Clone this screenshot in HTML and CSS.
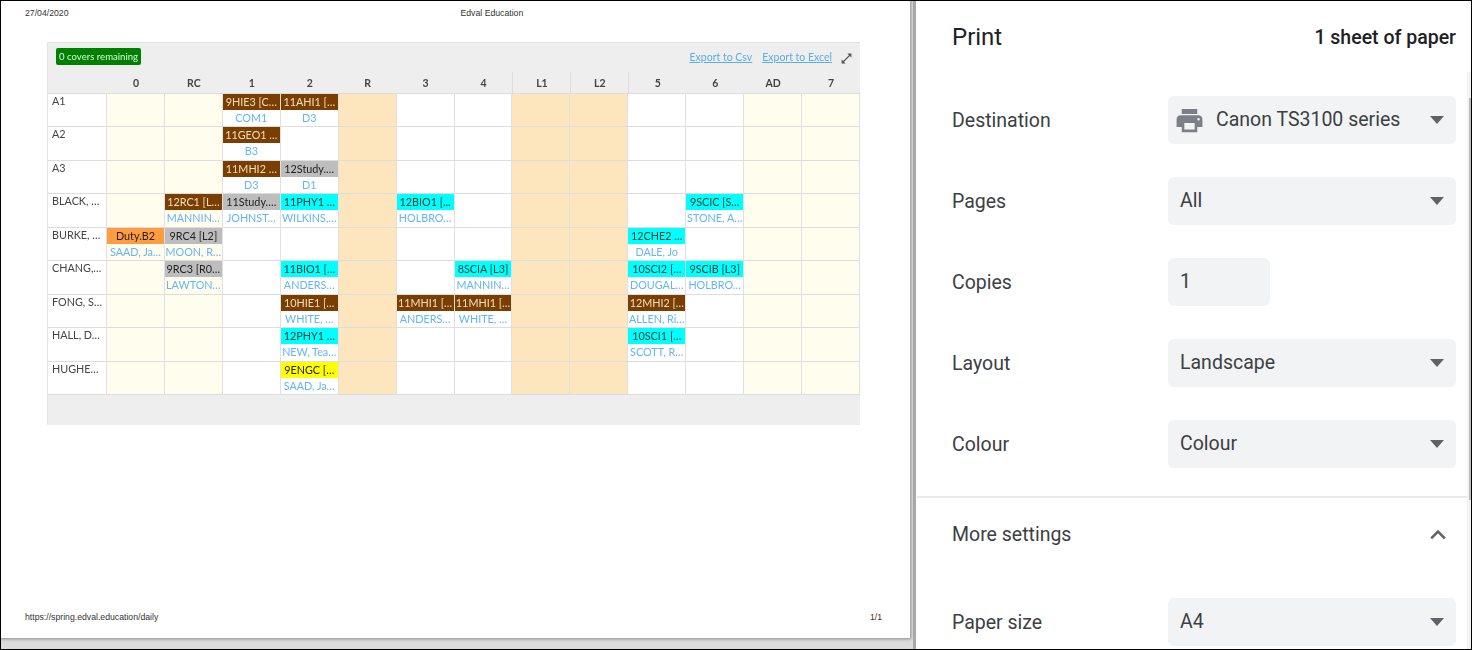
FILE: index.html
```html
<!DOCTYPE html>
<html lang="en">
<head>
<meta charset="utf-8">
<title>Print</title>
<link rel="stylesheet" href="styles.css">
</head>
<body>
<div class="frame">
  <main class="preview">
    <section class="sheet">
      <header class="sheet-head"><span>27/04/2020</span><span class="sheet-title">Edval Education</span></header>
      <div class="report">
        <div class="toolbar">
          <span class="badge">0 covers remaining</span>
          <span class="tools">
            <a class="export">Export to Csv</a>
            <a class="export">Export to Excel</a>
            <svg class="expand" viewBox="0 0 11 11" width="11" height="11"><path d="M2 9 9 2" stroke="#555" stroke-width="1.1" fill="none"/><path d="M6.4 .6h4v4zM.6 6.4v4h4z" fill="#555"/></svg>
          </span>
        </div>
        <div class="grid">
          <div class="hd"></div><div class="hd">0</div><div class="hd">RC</div><div class="hd">1</div><div class="hd">2</div><div class="hd">R</div><div class="hd">3</div><div class="hd">4</div><div class="hd sep">L1</div><div class="hd sep">L2</div><div class="hd sep">5</div><div class="hd">6</div><div class="hd">AD</div><div class="hd">7</div>

          <div class="c name">A1</div><div class="c y"></div><div class="c y"></div>
          <div class="c"><div class="l brown">9HIE3 [C…</div><div class="w">COM1</div></div>
          <div class="c"><div class="l brown">11AHI1 […</div><div class="w">D3</div></div>
          <div class="c o"></div><div class="c"></div><div class="c"></div><div class="c o"></div><div class="c o"></div><div class="c"></div><div class="c"></div><div class="c y"></div><div class="c y"></div>

          <div class="c name">A2</div><div class="c y"></div><div class="c y"></div>
          <div class="c"><div class="l brown">11GEO1 …</div><div class="w">B3</div></div>
          <div class="c"></div>
          <div class="c o"></div><div class="c"></div><div class="c"></div><div class="c o"></div><div class="c o"></div><div class="c"></div><div class="c"></div><div class="c y"></div><div class="c y"></div>

          <div class="c name">A3</div><div class="c y"></div><div class="c y"></div>
          <div class="c"><div class="l brown">11MHI2 …</div><div class="w">D3</div></div>
          <div class="c"><div class="l grey">12Study.…</div><div class="w">D1</div></div>
          <div class="c o"></div><div class="c"></div><div class="c"></div><div class="c o"></div><div class="c o"></div><div class="c"></div><div class="c"></div><div class="c y"></div><div class="c y"></div>

          <div class="c name">BLACK, …</div><div class="c y"></div>
          <div class="c y"><div class="l brown">12RC1 [L…</div><div class="w">MANNIN…</div></div>
          <div class="c"><div class="l grey">11Study.…</div><div class="w">JOHNST…</div></div>
          <div class="c"><div class="l cyan">11PHY1 …</div><div class="w">WILKINS,…</div></div>
          <div class="c o"></div>
          <div class="c"><div class="l cyan">12BIO1 [...</div><div class="w">HOLBRO…</div></div>
          <div class="c"></div><div class="c o"></div><div class="c o"></div><div class="c"></div>
          <div class="c"><div class="l cyan">9SCIC [S…</div><div class="w">STONE, A…</div></div>
          <div class="c y"></div><div class="c y"></div>

          <div class="c name">BURKE, …</div>
          <div class="c y"><div class="l orange">Duty.B2</div><div class="w">SAAD, Ja…</div></div>
          <div class="c y"><div class="l grey">9RC4 [L2]</div><div class="w">MOON, R…</div></div>
          <div class="c"></div><div class="c"></div><div class="c o"></div><div class="c"></div><div class="c"></div><div class="c o"></div><div class="c o"></div>
          <div class="c"><div class="l cyan">12CHE2 …</div><div class="w">DALE, Jo</div></div>
          <div class="c"></div><div class="c y"></div><div class="c y"></div>

          <div class="c name">CHANG,…</div><div class="c y"></div>
          <div class="c y"><div class="l grey">9RC3 [R0…</div><div class="w">LAWTON…</div></div>
          <div class="c"></div>
          <div class="c"><div class="l cyan">11BIO1 […</div><div class="w">ANDERS…</div></div>
          <div class="c o"></div><div class="c"></div>
          <div class="c"><div class="l cyan">8SCIA [L3]</div><div class="w">MANNIN…</div></div>
          <div class="c o"></div><div class="c o"></div>
          <div class="c"><div class="l cyan">10SCI2 […</div><div class="w">DOUGAL…</div></div>
          <div class="c"><div class="l cyan">9SCIB [L3]</div><div class="w">HOLBRO…</div></div>
          <div class="c y"></div><div class="c y"></div>

          <div class="c name">FONG, S…</div><div class="c y"></div><div class="c y"></div><div class="c"></div>
          <div class="c"><div class="l brown">10HIE1 […</div><div class="w">WHITE, …</div></div>
          <div class="c o"></div>
          <div class="c"><div class="l brown">11MHI1 […</div><div class="w">ANDERS…</div></div>
          <div class="c"><div class="l brown">11MHI1 […</div><div class="w">WHITE, …</div></div>
          <div class="c o"></div><div class="c o"></div>
          <div class="c"><div class="l brown">12MHI2 […</div><div class="w">ALLEN, Ri…</div></div>
          <div class="c"></div><div class="c y"></div><div class="c y"></div>

          <div class="c name">HALL, D…</div><div class="c y"></div><div class="c y"></div><div class="c"></div>
          <div class="c"><div class="l cyan">12PHY1 …</div><div class="w">NEW, Tea…</div></div>
          <div class="c o"></div><div class="c"></div><div class="c"></div><div class="c o"></div><div class="c o"></div>
          <div class="c"><div class="l cyan">10SCI1 […</div><div class="w">SCOTT, R…</div></div>
          <div class="c"></div><div class="c y"></div><div class="c y"></div>

          <div class="c name">HUGHE…</div><div class="c y"></div><div class="c y"></div><div class="c"></div>
          <div class="c"><div class="l yellow">9ENGC […</div><div class="w">SAAD, Ja…</div></div>
          <div class="c o"></div><div class="c"></div><div class="c"></div><div class="c o"></div><div class="c o"></div><div class="c"></div><div class="c"></div><div class="c y"></div><div class="c y"></div>
        </div>
        <div class="report-foot"></div>
      </div>
      <footer class="sheet-foot"><span>https://spring.edval.education/daily</span><span>1/1</span></footer>
    </section>
  </main>
  <aside class="panel">
    <div class="scrollbar"><div class="thumb"></div></div>
    <div class="panel-head"><h1>Print</h1><span class="sheets">1 sheet of paper</span></div>
    <div class="setting">
      <span class="label">Destination</span>
      <div class="select">
        <svg class="printer" viewBox="0 0 24 24" width="31" height="31"><path d="M19 8H5c-1.66 0-3 1.34-3 3v6h4v4h12v-4h4v-6c0-1.66-1.34-3-3-3zm-3 11H8v-5h8v5zm3-7c-.55 0-1-.45-1-1s.45-1 1-1 1 .45 1 1-.45 1-1 1zm-1-9H6v4h12V3z" fill="#7c8086"/></svg>
        <span class="value">Canon TS3100 series</span><i class="caret"></i>
      </div>
    </div>
    <div class="setting"><span class="label">Pages</span><div class="select"><span class="value">All</span><i class="caret"></i></div></div>
    <div class="setting"><span class="label">Copies</span><div class="select copies"><span class="value">1</span></div></div>
    <div class="setting"><span class="label">Layout</span><div class="select"><span class="value">Landscape</span><i class="caret"></i></div></div>
    <div class="setting"><span class="label">Colour</span><div class="select"><span class="value">Colour</span><i class="caret"></i></div></div>
    <div class="more">
      <span class="label">More settings</span>
      <svg class="chevron" viewBox="0 0 16 11" width="16" height="11"><path d="M1.2 9.4 8 2.6l6.8 6.8" fill="none" stroke="#5f6368" stroke-width="2.6"/></svg>
    </div>
    <div class="setting"><span class="label">Paper size</span><div class="select"><span class="value">A4</span><i class="caret"></i></div></div>
  </aside>
</div>
</body>
</html>
```
FILE: styles.css
```css
* { box-sizing: border-box; }
html, body { margin: 0; height: 650px; overflow: hidden; background: #fff; }
.frame {
  display: flex;
  height: 650px;
  border: 1px solid #000;
  overflow: hidden;
}
.preview {
  flex: none;
  width: 915px;
  height: 648px;
  background: #dcdcdc;
  border-right: 3px solid #a9a9a9;
}
.sheet {
  display: flex;
  flex-direction: column;
  height: 637px;
  width: 909px;
  background: #fff;
  box-shadow: 0 0 3px 1px #8a8a8a;
  padding: 7px 28px 0 24px;
  font: 8.7px "Liberation Sans", Arial, sans-serif;
  color: #333;
}
.sheet-head { display: flex; height: 34px; line-height: 10px; }
.sheet-title { margin-left: 392px; }
.report {
  width: 813px;
  margin-left: 22px;
  background: #eee;
  border-top: 1px solid #e3e3e3;
  border-left: 1px solid #e6e6e6;
  font-family: Lato, sans-serif;
  filter: blur(.25px);
}
.toolbar { display: flex; justify-content: space-between; align-items: center; height: 29px; padding: 0 7px 2px 8px; }
.badge { background: #008000; color: #dff5df; font-size: 9.6px; line-height: 17px; height: 17px; padding: 0 3px; border-radius: 2px; }
.tools { display: flex; align-items: center; gap: 10px; }
.export { font-size: 10.5px; color: #5aaeea; text-decoration: underline; }
.expand { margin: 3px 1px 0 -1px; }
.grid {
  display: grid;
  grid-template-columns: 59px repeat(13, 57.93px);
  grid-template-rows: 22px repeat(9, 33.45px);
}
.hd {
  display: flex; align-items: center; justify-content: center;
  font-size: 10.5px; font-weight: 700; color: #444;
  border-bottom: 1px solid #ddd;
}
.hd.sep { border-left: 1px solid #ddd; }
.c {
  background: #fff;
  border-right: 1px solid #e0e0e0;
  border-bottom: 1px solid #ddd;
  text-align: center;
  font-size: 10.8px;
  line-height: 16px;
  min-width: 0;
  overflow: hidden;
  white-space: nowrap;
}
.name { text-align: left; padding-left: 4px; color: #444; line-height: 14px; }
.y { background: #fffeee; }
.o { background: #fde5bd; }
.l { height: 16px; color: #222; }
.brown { background: #7a3f00; color: #f0dcc0; }
.grey { background: #bdbdbd; }
.cyan { background: #00ffff; color: #043; }
.orange { background: #ff9c40; }
.yellow { background: #ffff00; }
.w { color: #64b5f6; line-height: 16px; }
.report-foot { height: 30px; }
.sheet-foot { display: flex; justify-content: space-between; margin-top: auto; height: 26px; }

.panel { position: relative; flex: 1; min-width: 0; padding-left: 36px; font-family: Roboto, sans-serif; color: #3c4043; background: #fff; }
.scrollbar { position: absolute; top: 71px; right: 0; bottom: 0; width: 4px; background: #f3f3f3; }
.thumb { margin: 26px 0 0 2px; width: 2px; height: 402px; background: #bdbdbd; }
.panel-head { display: flex; justify-content: space-between; align-items: center; height: 72px; padding-right: 15px; }
h1 { margin: 0; font-size: 24px; font-weight: 400; color: #202124; }
.sheets { font-size: 19.5px; color: #202124; font-weight: 500; }
.setting { display: flex; align-items: center; height: 48px; margin-bottom: 33px; margin-top: 23px; }
.setting + .setting { margin-top: 0; }
.label { flex: none; width: 216px; font-size: 19.5px; }
.select { display: flex; align-items: center; width: 288px; height: 48px; padding: 0 12px; background: #f1f3f4; border-radius: 6px; }
.copies { width: 102px; }
.value { font-size: 19.5px; flex: 1; position: relative; top: -1px; }
.printer { margin-right: 11px; margin-left: -6px; flex: none; }
.caret { width: 0; height: 0; border: 7.5px solid transparent; border-top: 8px solid #5f6368; border-bottom: 0; margin-right: .5px; }
.more {
  display: flex; align-items: center; justify-content: space-between;
  height: 74px; margin: -5px 4px 28px -35px; padding: 0 21px 0 35px;
  border-top: 2px solid #e8eaed;
}
.more + .setting { margin-top: 0; }
```
